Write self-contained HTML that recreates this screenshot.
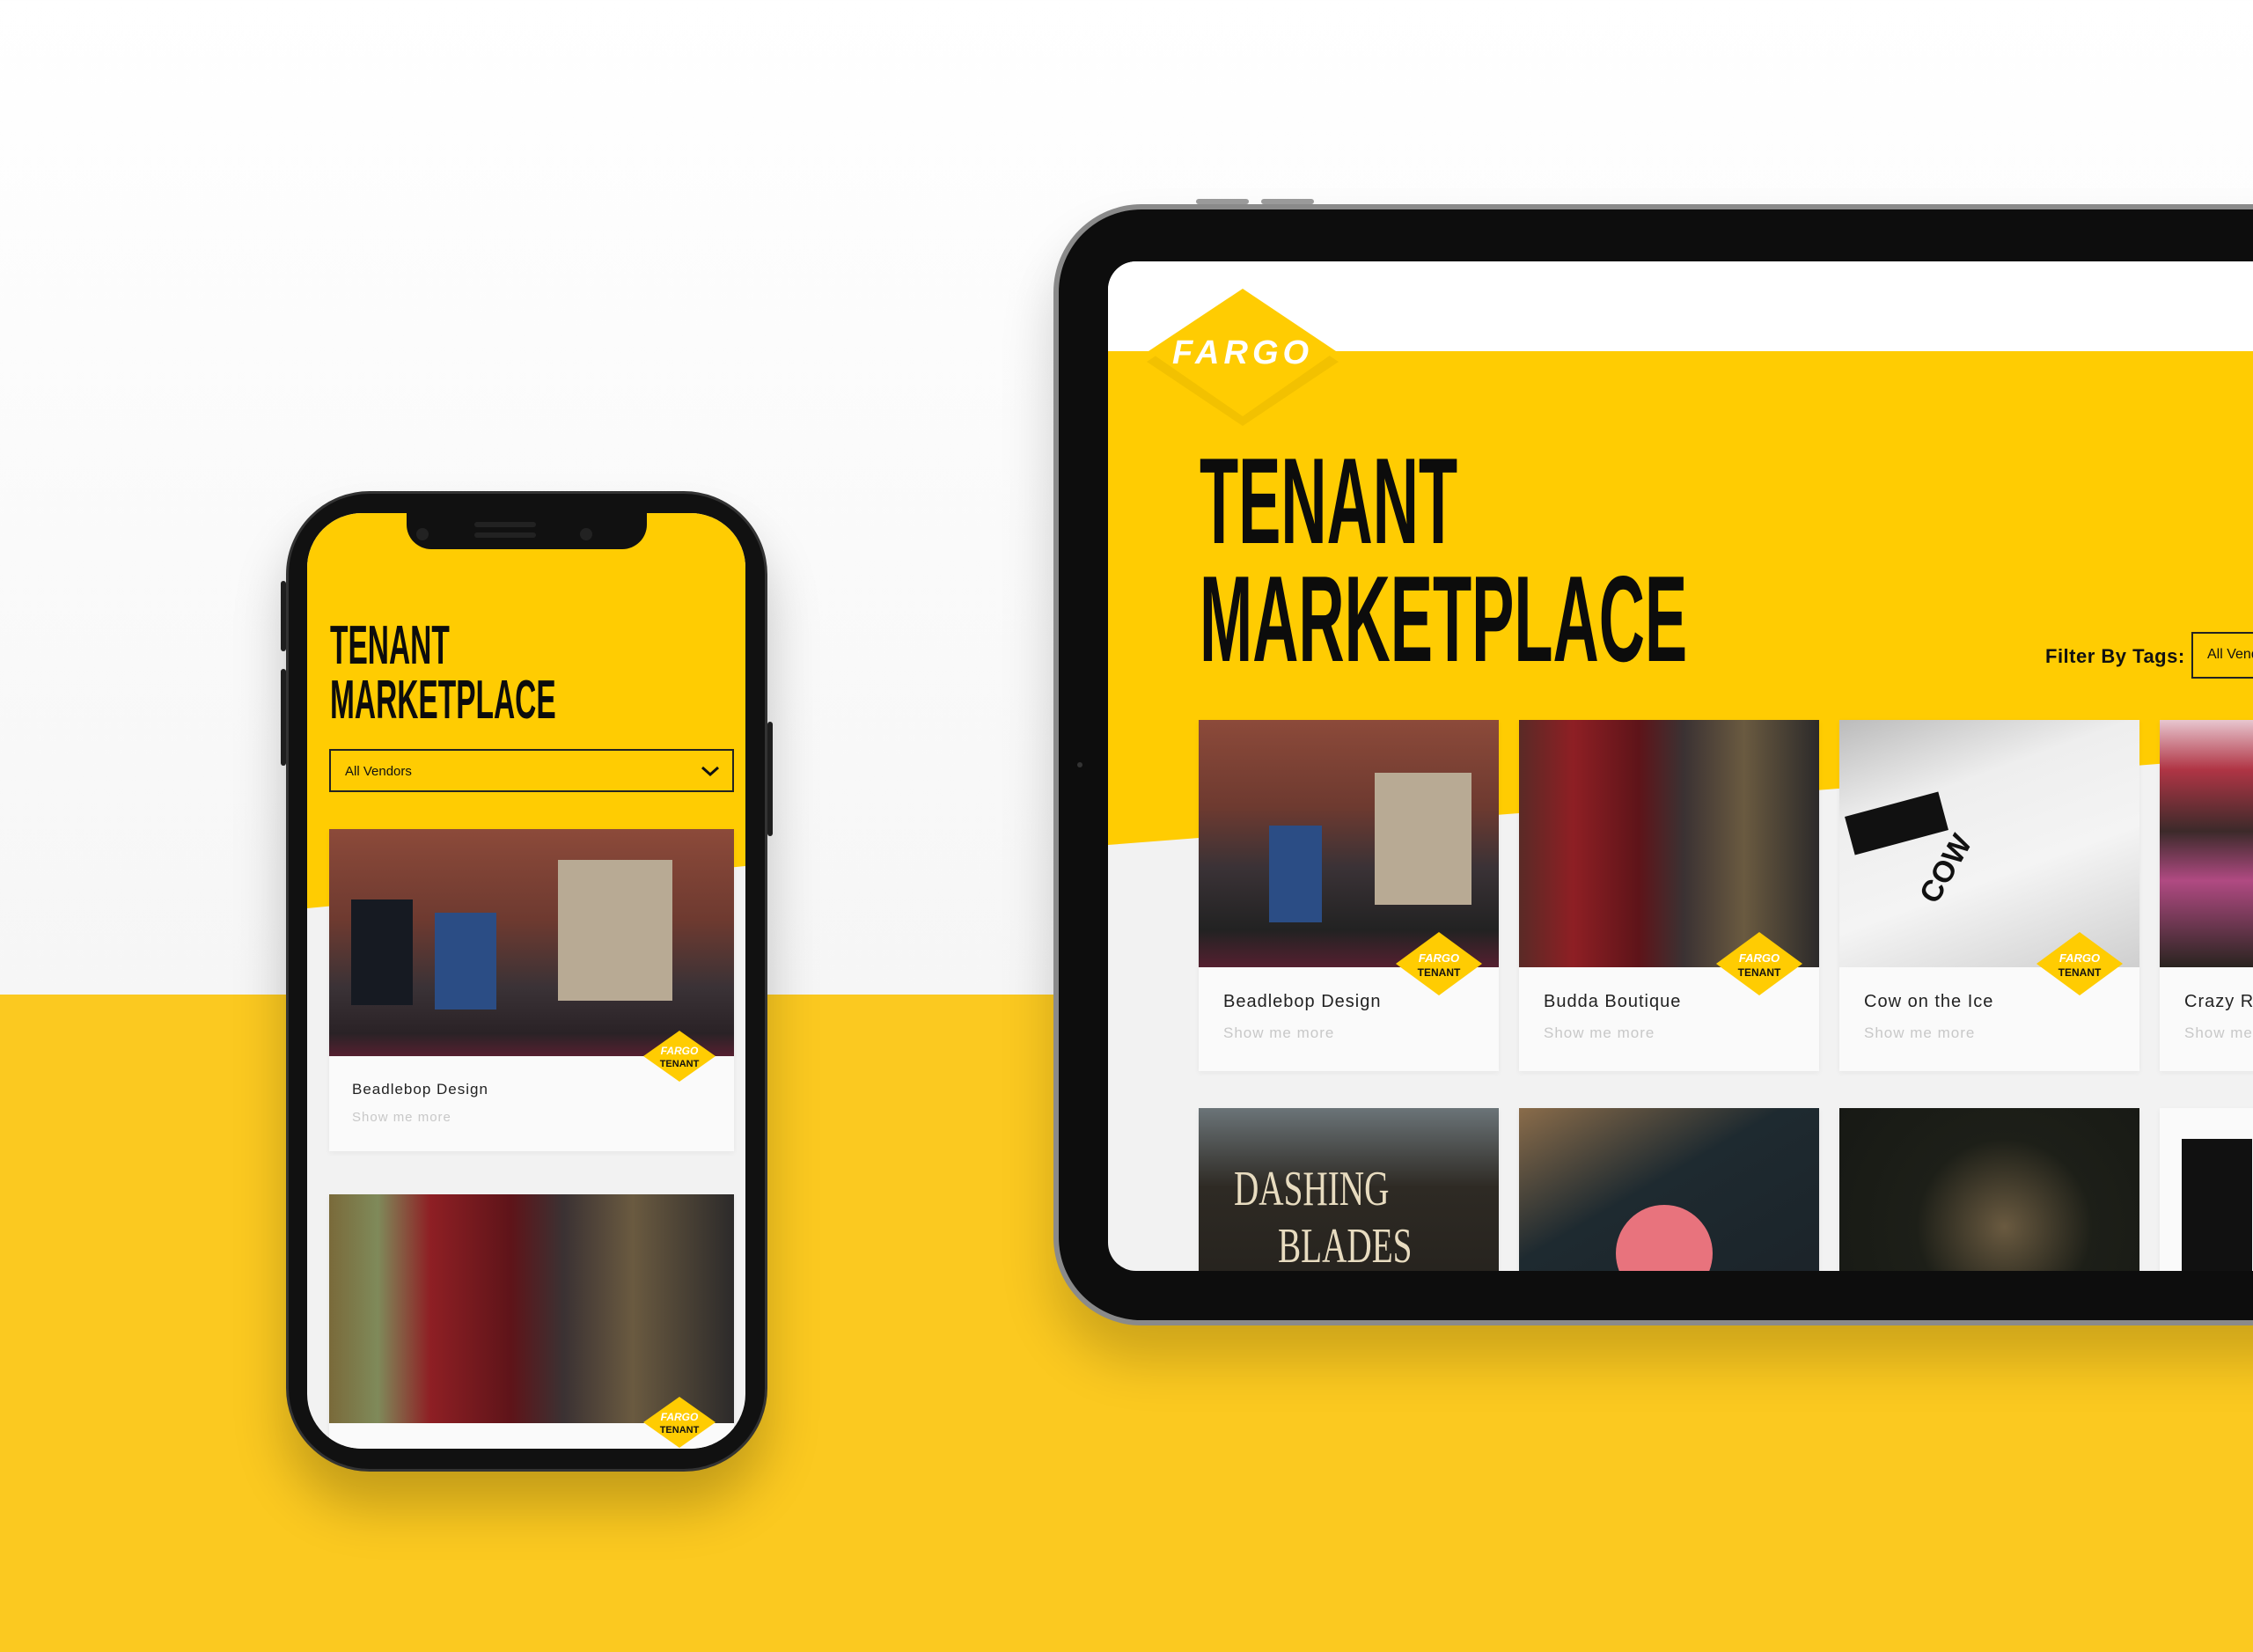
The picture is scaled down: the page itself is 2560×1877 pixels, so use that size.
<!DOCTYPE html>
<html><head><meta charset="utf-8"><style>
*{margin:0;padding:0;box-sizing:border-box}
body{width:2560px;height:1877px;position:relative;overflow:hidden;background:linear-gradient(180deg,#ffffff 0,#f6f6f6 1130px);font-family:"Liberation Sans",sans-serif}
.abs{position:absolute}
.ybg{left:0;top:1130px;width:2560px;height:747px;background:#fbc920}
.cond{font-weight:700;color:#0c0c0c;transform-origin:0 0;white-space:nowrap;line-height:1;letter-spacing:0}
.card{position:absolute;background:#fafafa;box-shadow:0 2px 6px rgba(0,0,0,.05)}
.img{position:absolute;left:0;top:0;width:100%}
.ttl{position:absolute;font-size:20px;color:#222;letter-spacing:1px}
.sm{position:absolute;font-size:17px;color:#c8c8c8;letter-spacing:1px}
</style></head><body>
<div class="abs ybg"></div>

<!-- TABLET -->
<div class="abs" style="left:1197px;top:232px;width:1500px;height:1274px;border-radius:100px;background:#8a8a8a;box-shadow:0 40px 60px rgba(0,0,0,.18)"></div>
<div class="abs" style="left:1203px;top:238px;width:1500px;height:1262px;border-radius:94px;background:#0d0d0d"></div>
<div class="abs" style="left:1359px;top:226px;width:60px;height:6px;background:#9a9a9a;border-radius:3px"></div>
<div class="abs" style="left:1433px;top:226px;width:60px;height:6px;background:#9a9a9a;border-radius:3px"></div>
<div class="abs" style="left:1259px;top:297px;width:1400px;height:1147px;border-radius:32px;background:#f2f2f2;overflow:hidden">
  <div class="abs" style="left:0;top:0;width:1400px;height:102px;background:#fff"></div>
  <svg class="abs" style="left:0;top:0" width="1400" height="700">
    <polygon points="0,102 1400,102 1400,555 0,663" fill="#ffcc02"/>
    <polygon points="153,36 262,108 153,181 44,108" fill="#000" opacity=".05" transform="translate(0,6)"/>
    <polygon points="153,31 259,102 153,176 46,102" fill="#ffcc02"/>
    <text x="153" y="116" text-anchor="middle" font-family="Liberation Sans" font-weight="700" font-style="italic" font-size="38" fill="#fff" letter-spacing="5">FARGO</text>
  </svg>
  <div class="abs cond" style="left:104px;top:203px;font-size:139px;transform:scaleX(.52)">TENANT</div>
  <div class="abs cond" style="left:104px;top:337px;font-size:139px;transform:scaleX(.52)">MARKETPLACE</div>
  <div class="abs" style="left:1065px;top:436px;font-size:22px;font-weight:700;color:#111;letter-spacing:.5px">Filter By Tags:</div>
  <div class="abs" style="left:1231px;top:421px;width:300px;height:53px;border:2px solid #222;font-size:16px;padding:15px 0 0 16px;color:#111">All Vendors</div>

  <div class="card" style="left:103px;top:521px;width:341px;height:399px">
    <div class="img" style="height:281px;background:linear-gradient(180deg,#8c4a3a 0,#6e3a30 35%,#3a3236 60%,#222 85%,#552030 100%)"></div>
    <div class="abs" style="left:200px;top:60px;width:110px;height:150px;background:#b8aa94"></div>
    <div class="abs" style="left:80px;top:120px;width:60px;height:110px;background:#2b4d85"></div>
    <div class="ttl" style="left:28px;top:309px">Beadlebop Design</div><div class="sm" style="left:28px;top:346px">Show me more</div>
  </div>
  <div class="card" style="left:467px;top:521px;width:341px;height:399px">
    <div class="img" style="height:281px;background:linear-gradient(90deg,#5a2a26 0,#8e1f24 18%,#5e1419 40%,#3b3233 55%,#6a5a40 75%,#2c2a2a 100%)"></div>
    <div class="ttl" style="left:28px;top:309px">Budda Boutique</div><div class="sm" style="left:28px;top:346px">Show me more</div>
  </div>
  <div class="card" style="left:831px;top:521px;width:341px;height:399px">
    <div class="img" style="height:281px;background:linear-gradient(160deg,#bbb 0,#eee 30%,#f4f4f4 60%,#cfcfcf 100%)"></div>
    <div class="abs" style="left:10px;top:95px;width:110px;height:45px;background:#111;transform:rotate(-15deg)"></div>
    <div class="abs" style="left:80px;top:150px;font-size:34px;font-weight:700;color:#111;transform:rotate(-60deg)">COW</div>
    <div class="ttl" style="left:28px;top:309px">Cow on the Ice</div><div class="sm" style="left:28px;top:346px">Show me more</div>
  </div>
  <div class="card" style="left:1195px;top:521px;width:341px;height:399px">
    <div class="img" style="height:281px;background:linear-gradient(180deg,#e8c6cf 0,#b03545 20%,#3c2a2a 45%,#b04a82 65%,#2a2420 100%)"></div>
    <div class="ttl" style="left:28px;top:309px">Crazy Rat</div><div class="sm" style="left:28px;top:346px">Show me more</div>
  </div>
  <div class="card" style="left:103px;top:962px;width:341px;height:300px;background:linear-gradient(180deg,#6b7478 0,#2e2a24 30%,#1e1c18 100%)">
    <div class="abs" style="left:40px;top:60px;font-family:'Liberation Serif',serif;font-size:56px;color:#e8dcc0;transform:scaleX(.7);transform-origin:0 0">DASHING</div>
    <div class="abs" style="left:90px;top:125px;font-family:'Liberation Serif',serif;font-size:56px;color:#e8dcc0;transform:scaleX(.7);transform-origin:0 0">BLADES</div>
  </div>
  <div class="card" style="left:467px;top:962px;width:341px;height:300px;background:linear-gradient(150deg,#8a6c4a 0,#1e2a30 35%,#1a2026 100%)">
    <div class="abs" style="left:110px;top:110px;width:110px;height:110px;border-radius:50%;background:#e8737d"></div>
  </div>
  <div class="card" style="left:831px;top:962px;width:341px;height:300px;background:radial-gradient(circle at 55% 45%,#6a5a40 0,#1d1f18 40%,#161814 100%)"></div>
  <div class="card" style="left:1195px;top:962px;width:341px;height:300px;background:#fafafa">
    <div class="abs" style="left:25px;top:35px;width:80px;height:200px;background:#111"></div>
  </div>
  <svg class="abs" style="left:0;top:0" width="1400" height="900">
    <g id="b1"><polygon points="376,762 425,798 376,834 327,798" fill="#ffcc02"/><text x="376" y="796" text-anchor="middle" font-size="13" font-weight="700" font-style="italic" fill="#fff" font-family="Liberation Sans">FARGO</text><text x="376" y="812" text-anchor="middle" font-size="12" font-weight="700" fill="#111" font-family="Liberation Sans">TENANT</text></g>
    <use href="#b1" x="364"/><use href="#b1" x="728"/>
  </svg>
</div>
<div class="abs" style="left:1224px;top:866px;width:6px;height:6px;border-radius:50%;background:#333"></div>

<!-- PHONE -->
<div class="abs" style="left:319px;top:660px;width:6px;height:80px;background:#222;border-radius:3px"></div>
<div class="abs" style="left:319px;top:760px;width:6px;height:110px;background:#222;border-radius:3px"></div>
<div class="abs" style="left:872px;top:820px;width:6px;height:130px;background:#222;border-radius:3px"></div>
<div class="abs" style="left:325px;top:558px;width:547px;height:1114px;border-radius:95px;background:#111;border:3px solid #333;box-shadow:0 40px 60px rgba(0,0,0,.22)"></div>
<div class="abs" style="left:349px;top:583px;width:498px;height:1063px;border-radius:62px;background:#f2f2f2;overflow:hidden">
  <svg class="abs" style="left:0;top:0" width="498" height="500"><polygon points="0,0 498,0 498,401 0,449" fill="#ffcc02"/></svg>
  <div class="abs" style="left:113px;top:0;width:273px;height:41px;background:#111;border-radius:0 0 28px 28px"></div>
  <div class="abs" style="left:190px;top:10px;width:70px;height:6px;background:#222;border-radius:3px"></div>
  <div class="abs" style="left:190px;top:22px;width:70px;height:6px;background:#222;border-radius:3px"></div>
  <div class="abs" style="left:124px;top:17px;width:14px;height:14px;border-radius:50%;background:#222"></div>
  <div class="abs" style="left:310px;top:17px;width:14px;height:14px;border-radius:50%;background:#222"></div>
  <div class="abs cond" style="left:26px;top:120px;font-size:62px;transform:scaleX(.54)">TENANT</div>
  <div class="abs cond" style="left:26px;top:182px;font-size:62px;transform:scaleX(.54)">MARKETPLACE</div>
  <div class="abs" style="left:25px;top:268px;width:460px;height:49px;border:2px solid #222;font-size:15px;padding:15px 0 0 16px;color:#111">All Vendors
    <svg class="abs" style="right:14px;top:16px" width="22" height="14"><polyline points="2,3 11,11 20,3" fill="none" stroke="#111" stroke-width="3"/></svg></div>
  <div class="card" style="left:25px;top:359px;width:460px;height:366px">
    <div class="img" style="height:258px;background:linear-gradient(180deg,#8c4a3a 0,#6e3a30 40%,#3a3236 70%,#2a2226 90%,#552030 100%)"></div>
    <div class="abs" style="left:260px;top:35px;width:130px;height:160px;background:#b8aa94"></div>
    <div class="abs" style="left:120px;top:95px;width:70px;height:110px;background:#2b4d85"></div>
    <div class="abs" style="left:25px;top:80px;width:70px;height:120px;background:#161a22"></div>
    <div class="ttl" style="left:26px;top:286px;font-size:17px">Beadlebop Design</div><div class="sm" style="left:26px;top:319px;font-size:15px">Show me more</div>
  </div>
  <div class="card" style="left:25px;top:774px;width:460px;height:300px">
    <div class="img" style="height:260px;background:linear-gradient(90deg,#7a6a3a 0,#7f8a5a 12%,#8e1f24 25%,#5e1419 45%,#3b3233 58%,#6a5a40 75%,#2c2a2a 100%)"></div>
  </div>
  <svg class="abs" style="left:0;top:0" width="498" height="1063">
    <g id="b2"><polygon points="423,588 464,617 423,646 382,617" fill="#ffcc02"/><text x="423" y="615" text-anchor="middle" font-size="12" font-weight="700" font-style="italic" fill="#fff" font-family="Liberation Sans">FARGO</text><text x="423" y="629" text-anchor="middle" font-size="11" font-weight="700" fill="#111" font-family="Liberation Sans">TENANT</text></g>
    <use href="#b2" y="416"/>
  </svg>
</div>
</body></html>
